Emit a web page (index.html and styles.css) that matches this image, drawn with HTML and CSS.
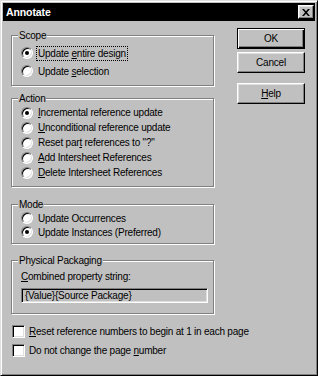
FILE: index.html
```html
<!DOCTYPE html>
<html>
<head>
<meta charset="utf-8">
<title>Annotate</title>
<link rel="stylesheet" href="styles.css">
</head>
<body>
<div class="window">
  <div class="titlebar">
    <span class="title">Annotate</span>
    <span class="close"><svg width="8" height="7" viewBox="0 0 8 7"><path d="M0 0h2l2 2.2L6 0h2L5 3.5 8 7H6L4 4.8 2 7H0l3-3.5z" fill="#000"/></svg></span>
  </div>
  <div class="main">
    <div class="groups">
      <fieldset class="group scope">
        <legend>Scope</legend>
        <label class="opt"><span class="rb on"></span><span class="txt focus">Update <u>e</u>ntire design</span></label>
        <label class="opt"><span class="rb"></span><span class="txt">Update <u>s</u>election</span></label>
      </fieldset>
      <fieldset class="group action">
        <legend>Action</legend>
        <label class="opt"><span class="rb on"></span><span class="txt"><u>I</u>ncremental reference update</span></label>
        <label class="opt"><span class="rb"></span><span class="txt"><u>U</u>nconditional reference update</span></label>
        <label class="opt"><span class="rb"></span><span class="txt">Reset par<u>t</u> references to "?"</span></label>
        <label class="opt"><span class="rb"></span><span class="txt"><u>A</u>dd Intersheet References</span></label>
        <label class="opt"><span class="rb"></span><span class="txt"><u>D</u>elete Intersheet References</span></label>
      </fieldset>
      <fieldset class="group mode">
        <legend>Mode</legend>
        <label class="opt"><span class="rb"></span><span class="txt">Update Occurrences</span></label>
        <label class="opt"><span class="rb on"></span><span class="txt">Update Instances (Preferred)</span></label>
      </fieldset>
      <fieldset class="group packaging">
        <legend>Physical Packaging</legend>
        <div class="caption"><u>C</u>ombined property string:</div>
        <div class="field">{Value}{Source Package}</div>
      </fieldset>
    </div>
    <div class="buttons">
      <button class="btn default">OK</button>
      <button class="btn">Cancel</button>
      <button class="btn help"><u>H</u>elp</button>
    </div>
  </div>
  <div class="checks">
    <label class="chk"><span class="cb"></span><span class="txt"><u>R</u>eset reference numbers to begin at 1 in each page</span></label>
    <label class="chk"><span class="cb"></span><span class="txt">Do not change the page <u>n</u>umber</span></label>
  </div>
</div>
</body>
</html>
```

FILE: styles.css
```css
html, body {
  margin: 0;
  padding: 0;
  background: #e4e4e4;
}
body {
  font-family: "Liberation Sans", Arial, sans-serif;
  font-size: 10px;
  letter-spacing: -0.22px;
  color: #000;
}
.window {
  width: 318px;
  height: 376px;
  box-sizing: border-box;
  background: #c0c0c0;
  border: 1px solid;
  border-color: #dfdfdf #000 #000 #dfdfdf;
  box-shadow: inset 1px 1px 0 #fff, inset -1px -1px 0 #808080;
  padding: 2px;
}
.titlebar {
  height: 18px;
  background: #000;
  color: #fff;
  display: flex;
  align-items: center;
  justify-content: space-between;
  padding: 0 1px 0 3px;
  font-weight: bold;
  font-size: 10.5px;
  letter-spacing: -0.1px;
}
.close {
  width: 16px;
  height: 14px;
  box-sizing: border-box;
  background: #c0c0c0;
  border: 1px solid;
  border-color: #fff #000 #000 #fff;
  box-shadow: inset -1px -1px 0 #808080, inset 1px 1px 0 #dfdfdf;
  display: flex;
  align-items: center;
  justify-content: center;
}
.close svg { display: block; }
.main {
  display: flex;
  padding: 8px 0 0 8px;
}
.groups {
  width: 203px;
  display: flex;
  flex-direction: column;
}
.group {
  margin: 0;
  padding: 0;
  min-width: 0;
  border: 1px solid #808080;
  box-shadow: 1px 1px 0 #fff, inset 1px 1px 0 #fff;
}
.group legend {
  margin-left: 6px;
  padding: 0 1px;
  line-height: 13px;
  background: #c0c0c0;
}
.opt {
  display: flex;
  align-items: center;
  padding-left: 9px;
}
.scope { padding-top: 2px; padding-bottom: 5px; }
.scope .opt { height: 18px; }
.action { margin-top: 6px; padding-bottom: 6px; }
.action .opt { height: 15px; }
.mode { margin-top: 11px; padding-bottom: 4px; }
.mode .opt { height: 14px; }
.packaging { margin-top: 10px; padding-bottom: 10px; }
.rb {
  width: 12px;
  height: 12px;
  flex: none;
  box-sizing: border-box;
  border-radius: 50%;
  background: #fff;
  border: 1px solid;
  border-color: #808080 #fff #fff #808080;
  box-shadow: inset 1px 1px 0 #000, inset -1px -1px 0 #dfdfdf;
  display: flex;
  align-items: center;
  justify-content: center;
  margin-right: 4px;
}
.rb.on::after {
  content: "";
  width: 4px;
  height: 4px;
  border-radius: 50%;
  background: #000;
}
.txt {
  display: inline-block;
  line-height: 11px;
  padding: 1px;
  white-space: nowrap;
}
.focus {
  outline: 1px dotted #000;
  outline-offset: 0;
}
u { text-underline-offset: 1px; }
.caption {
  padding: 3px 0 0 9px;
  line-height: 14px;
}
.field {
  margin: 4px 5px 0 9px;
  height: 15px;
  box-sizing: border-box;
  border: 1px solid;
  border-color: #808080 #fff #fff #808080;
  box-shadow: inset 1px 1px 0 #000, inset -1px -1px 0 #dfdfdf;
  padding: 1px 0 0 3px;
  line-height: 11px;
  white-space: nowrap;
}
.buttons {
  margin-left: 23px;
  display: flex;
  flex-direction: column;
}
.btn {
  width: 68px;
  height: 21px;
  box-sizing: border-box;
  margin: 3px 0 0;
  padding: 0;
  font: inherit;
  letter-spacing: inherit;
  color: #000;
  background: #c0c0c0;
  border: 1px solid;
  border-color: #fff #000 #000 #fff;
  box-shadow: inset -1px -1px 0 #808080, inset 1px 1px 0 #dfdfdf;
}
.btn.default {
  margin-top: -1px;
  border-color: #000;
  box-shadow: inset 1px 1px 0 #fff, inset -1px -1px 0 #000, inset -2px -2px 0 #808080;
}
.btn.help { margin-top: 10px; }
.checks {
  padding: 11px 0 0 9px;
  display: flex;
  flex-direction: column;
  gap: 6px;
}
.chk {
  display: flex;
  align-items: center;
  height: 13px;
}
.cb {
  width: 13px;
  height: 13px;
  flex: none;
  box-sizing: border-box;
  background: #fff;
  border: 1px solid;
  border-color: #808080 #fff #fff #808080;
  box-shadow: inset 1px 1px 0 #000, inset -1px -1px 0 #dfdfdf;
  margin-right: 3px;
}
```
